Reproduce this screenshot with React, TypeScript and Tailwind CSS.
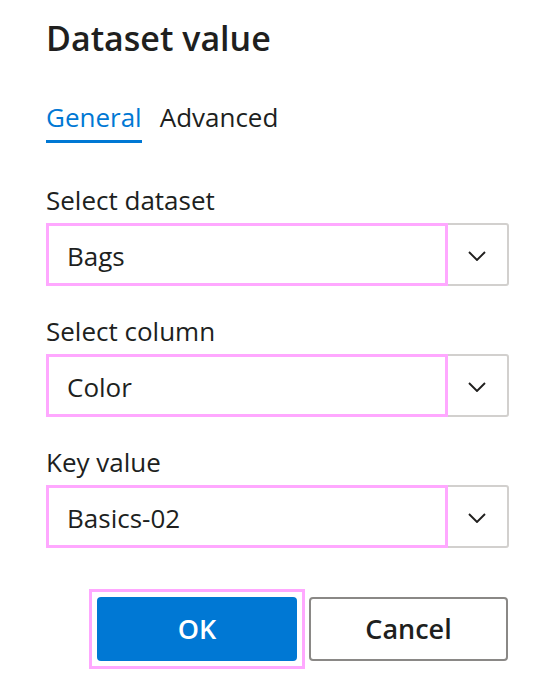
import { ReactNode } from "react";

const FONT = { fontFamily: '"Open Sans", "Noto Sans", sans-serif' };

function Chevron() {
  return (
    <svg width="18" height="10" viewBox="0 0 18 10" fill="none">
      <path d="M1 1l8 8 8-8" stroke="#201f1e" strokeWidth="1.9" />
    </svg>
  );
}

function Combo({ label, value }: { label: string; value: string }) {
  return (
    <div className="flex flex-col">
      <label className="text-[26px] leading-[34px] text-[#201f1e] mb-[6px]">{label}</label>
      <div className="flex h-[63px] w-[463px] border-2 border-[#d2d0ce] rounded-[3px]">
        <div className="-m-[2px] mr-0 w-[402px] h-[63px] border-[3px] border-[#ffa8ff] flex items-center pl-[18px] pt-[3px] text-[26px] text-[#201f1e]">
          {value}
        </div>
        <div className="flex-1 flex items-center justify-center pr-[2px] pt-[2px]">
          <Chevron />
        </div>
      </div>
    </div>
  );
}

function Field({ children }: { children: ReactNode }) {
  return <div className="mb-[28px]">{children}</div>;
}

export default function App() {
  return (
    <div className="w-[554px] h-[690px] bg-white px-[46px] pt-[14px]" style={FONT}>
      <h1 className="text-[34px] leading-[48px] font-semibold text-[#201f1e]">Dataset value</h1>

      <div className="flex gap-[18px] mt-[38px] text-[26px] leading-[34px]">
        <div className="text-[#0078d4] border-b-[3px] border-[#0078d4] pb-[6px]">General</div>
        <div className="text-[#201f1e]">Advanced</div>
      </div>

      <div className="mt-[40px]">
        <Field>
          <Combo label="Select dataset" value="Bags" />
        </Field>
        <Field>
          <Combo label="Select column" value="Color" />
        </Field>
        <Combo label="Key value" value="Basics-02" />
      </div>

      <div className="flex justify-end items-center gap-[4px] mt-[41px]">
        <div className="border-[3px] border-[#ffa8ff] p-[5px]">
          <button className="block w-[200px] h-[64px] rounded-[4px] bg-[#0078d4] text-white text-[27px] font-semibold">
            OK
          </button>
        </div>
        <button className="w-[199px] h-[64px] rounded-[4px] bg-white border-2 border-[#8a8886] text-[#201f1e] text-[27px] font-semibold">
          Cancel
        </button>
      </div>
    </div>
  );
}
